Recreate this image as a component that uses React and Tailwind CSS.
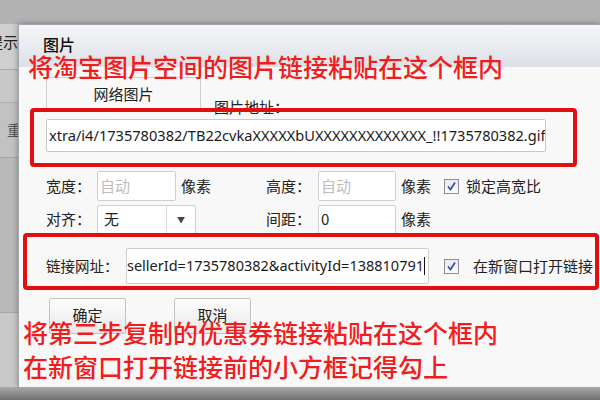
import React from "react";

const ui = { fontFamily: '"Noto Sans CJK SC", "Noto Sans", sans-serif' };
const latin = { fontFamily: '"Noto Sans", "Noto Sans CJK SC", sans-serif' };
const red = { fontFamily: '"Noto Sans CJK SC", sans-serif' };

function Check() {
  return (
    <div className="w-[15px] h-[15px] shrink-0 border border-[#8d8f94] bg-gradient-to-b from-[#e9ebee] to-[#fbfbfb] flex items-center justify-center">
      <svg width="11" height="11" viewBox="0 0 11 11">
        <path d="M2 5.5 L4.5 8.5 L9 1.5" fill="none" stroke="#3a4fa8" strokeWidth="1.8" />
      </svg>
    </div>
  );
}

function Field({ w, children, gray }) {
  return (
    <div
      className={`h-full border border-[#cfcfcf] rounded-[2px] bg-white flex items-center px-[2px] text-[15px] ${gray ? "text-[#bdbdbd]" : "text-[#222]"}`}
      style={{ width: w }}
    >
      {children}
    </div>
  );
}

export default function App() {
  return (
    <div className="w-[600px] h-[400px] relative overflow-hidden bg-[#b3b3b3] flex flex-col" style={ui}>
      <div className="h-[24px] shrink-0 bg-[#b3b3b3]" />
      <div className="flex h-[363px] shrink-0">
        <div className="w-[18px] shrink-0 flex flex-col bg-[#c4c4c4] overflow-hidden">
          <div className="h-[46px] bg-[#cfcfcf] border-b border-[#a9a9a9] flex justify-end items-start pt-[8px] overflow-hidden">
            <span className="text-[15px] text-[#222] whitespace-nowrap leading-[20px] shrink-0">提示</span>
          </div>
          <div className="h-[33px] border-b border-[#b0b0b0] bg-[#c8c8c8]" />
          <div className="h-[54px] flex justify-end items-center overflow-hidden bg-[#c2c2c2]">
            <span className="text-[15px] text-[#555] whitespace-nowrap shrink-0 mr-[-4px]">重</span>
          </div>
          <div className="h-[156px] border-t border-[#a5a5a5] bg-[#b9b9b9] border-b" />
          <div className="flex-1 bg-[#c9c9c9]" />
        </div>
        <div className="flex-1 flex flex-col bg-[#f8f8f8] border-l border-t border-[#a3a6ab] shadow-[0_0_6px_rgba(0,0,0,0.35)]">
          <div className="h-[42px] shrink-0 bg-gradient-to-b from-[#f4f6f9] to-[#dde1e6] pl-[24px] pt-[7px]">
            <span className="text-[16px] leading-[22px] text-[#111] font-medium">图片</span>
          </div>
          <div className="flex-1 flex flex-col pl-[27px]">
            <div className="mt-[10px] h-[38px] flex items-start">
              <div className="w-[155px] h-[34px] border-t border-l border-r border-[#cfcfcf] flex items-center justify-center text-[15px] text-[#222]">
                网络图片
              </div>
              <div className="ml-[13px] mt-[21px] text-[15px] leading-[17px] text-[#222]">图片地址：</div>
            </div>
            <div className="mt-[4px] w-[500px] h-[33px] border border-[#c8c8c8] rounded-[2px] bg-white flex items-center px-[2px] overflow-hidden">
              <span className="text-[14.6px] text-[#1a1a1a] whitespace-nowrap" style={latin}>
                xtra/i4/1735780382/TB22cvkaXXXXXbUXXXXXXXXXXXXX_!!1735780382.gif
              </span>
            </div>
            <div className="mt-[19px] h-[30px] flex items-center text-[15px] text-[#222]">
              <span className="w-[51px] shrink-0">宽度：</span>
              <Field w={79} gray>自动</Field>
              <span className="ml-[5px] w-[85px] shrink-0">像素</span>
              <span className="w-[52px] shrink-0">高度：</span>
              <Field w={78} gray>自动</Field>
              <span className="ml-[5px] w-[43px] shrink-0">像素</span>
              <Check />
              <span className="ml-[7px]">锁定高宽比</span>
            </div>
            <div className="mt-[4px] h-[29px] flex items-center text-[15px] text-[#222]">
              <span className="w-[51px] shrink-0">对齐：</span>
              <div className="w-[99px] h-full shrink-0 border border-[#cfcfcf] rounded-[2px] bg-white flex">
                <div className="w-[69px] flex items-center px-[6px] border-r border-[#dcdcdc]">无</div>
                <div className="flex-1 flex items-center justify-center text-[8px] text-[#444]">▼</div>
              </div>
              <span className="w-[70px] shrink-0" />
              <span className="w-[52px] shrink-0">间距：</span>
              <Field w={78}>0</Field>
              <span className="ml-[5px]">像素</span>
            </div>
            <div className="mt-[14px] h-[36px] flex items-center text-[15px] text-[#222]">
              <span className="w-[80px] shrink-0 text-[14.5px]">链接网址：</span>
              <div className="w-[303px] h-full shrink-0 border border-[#cfcfcf] rounded-[2px] bg-white flex items-center overflow-hidden">
                <span className="text-[14.5px] text-[#1a1a1a] whitespace-nowrap" style={latin}>
                  sellerId=1735780382&amp;activityId=138810791
                </span>
                <span className="w-[1px] h-[18px] bg-[#111] shrink-0" />
              </div>
              <span className="w-[15px] shrink-0" />
              <Check />
              <span className="ml-[14px] whitespace-nowrap">在新窗口打开链接</span>
            </div>
            <div className="mt-[14px] ml-[3px] flex text-[15px] text-[#222]">
              <div className="w-[77px] h-[36px] border border-[#c3c3c3] rounded-[2px] bg-gradient-to-b from-[#fdfdfd] to-[#e9e9e9] flex justify-center pt-[5px]">确定</div>
              <div className="ml-[48px] w-[77px] h-[36px] border border-[#c3c3c3] rounded-[2px] bg-gradient-to-b from-[#fdfdfd] to-[#e9e9e9] flex justify-center pt-[5px]">取消</div>
            </div>
          </div>
        </div>
      </div>
      <div className="flex-1 bg-gradient-to-b from-[#a9a9a9] to-[#707070]" />

      <div className="absolute left-[30px] top-[108px] w-[547px] h-[59px] border-4 border-[#e20f0f] rounded-[4px]" />
      <div className="absolute left-[23px] top-[233px] w-[576px] h-[57px] border-4 border-[#e20f0f] rounded-[4px]" />

      <div className="absolute left-[28px] top-[51px] text-[25px] leading-[30px] text-[#f31c1c] font-medium whitespace-nowrap" style={red}>
        将淘宝图片空间的图片链接粘贴在这个框内
      </div>
      <div className="absolute left-[23px] top-[317px] text-[25px] leading-[30px] text-[#f31c1c] font-medium whitespace-nowrap" style={red}>
        将第三步复制的优惠券链接粘贴在这个框内
      </div>
      <div className="absolute left-[23px] top-[351px] text-[25px] leading-[30px] text-[#f31c1c] font-medium whitespace-nowrap" style={red}>
        在新窗口打开链接前的小方框记得勾上
      </div>
    </div>
  );
}
